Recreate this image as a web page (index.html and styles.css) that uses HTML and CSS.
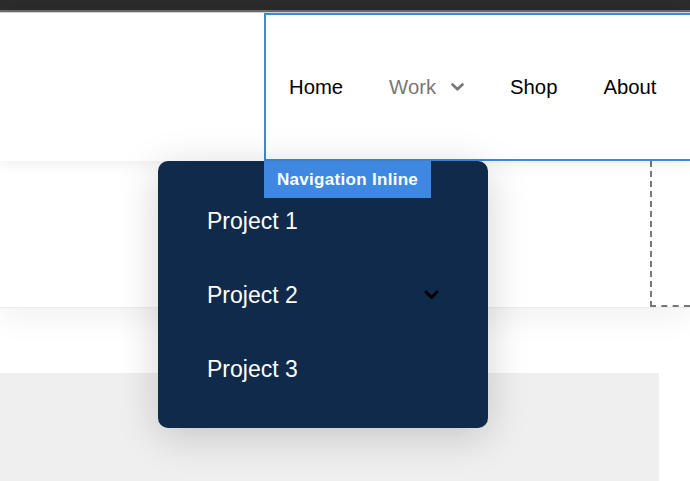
FILE: index.html
```html
<!DOCTYPE html>
<html lang="en">

<head>
	<meta charset="UTF-8">
	<title>Navigation Inline</title>
	<link rel="stylesheet" href="styles.css">
</head>

<body>
	<div class="topbar"></div>

	<header class="header">
		<div class="logo-space"></div>
		<nav class="nav">
			<a class="nav-item">Home</a>
			<a class="nav-item muted">Work
				<svg class="chev" width="13" height="8" viewBox="0 0 13 8"><path d="M1.5 1.5 L6.5 6.3 L11.5 1.5" fill="none" stroke="#777" stroke-width="2.6" stroke-linecap="round" stroke-linejoin="round"/></svg>
			</a>
			<a class="nav-item">Shop</a>
			<a class="nav-item">About</a>
			<span class="nav-label">Navigation Inline</span>
		</nav>

		<!-- dropdown opened under Work -->
		<ul class="dropdown">
			<li class="dropdown-item">Project 1</li>
			<li class="dropdown-item">Project 2
				<svg width="15" height="10" viewBox="0 0 15 10"><path d="M2 2 L7.5 7.5 L13 2" fill="none" stroke="#000" stroke-width="3" stroke-linecap="round" stroke-linejoin="round"/></svg>
			</li>
			<li class="dropdown-item">Project 3</li>
		</ul>
	</header>

	<section class="band">
		<div class="dashed"></div>
	</section>

	<section class="content">
		<div class="panel"></div>
	</section>
</body>

</html>
```

FILE: styles.css
```css
html,
body {
	margin: 0;
	overflow: hidden;
}

body {
	background: #fff;
	font-family: "Liberation Sans", Arial, sans-serif;
	height: 481px;
}

.topbar {
	height: 10px;
	background: #2b2b2b;
	border-bottom: 2px solid #6b6b6b;
	box-shadow: 0 1px 0 #d4d4d4;
	margin-bottom: 1px;
}

.header {
	position: relative;
	z-index: 3;
	display: flex;
	height: 148px;
	background: #fff;
	box-shadow: 0 3px 14px rgba(0, 0, 0, .07);
}

.logo-space {
	flex: 0 0 264px;
}

.nav {
	position: relative;
	display: flex;
	align-items: center;
	flex: none;
	padding-right: 60px;
	border: 2px solid #3e88e2;
}

.nav-item {
	display: flex;
	align-items: center;
	padding: 0 23px;
	font-size: 20.3px;
	color: #000;
	cursor: pointer;
}

.nav-item.muted {
	color: #777;
}

.chev {
	margin-left: 15px;
}

.nav-label {
	position: absolute;
	top: calc(100% + 2px);
	left: -2px;
	z-index: 5;
	height: 37px;
	line-height: 38px;
	padding: 0 13px;
	background: #3e88e2;
	color: #fff;
	font-size: 17px;
	font-weight: bold;
	letter-spacing: .3px;
}

.dropdown {
	position: absolute;
	top: 100%;
	left: 158px;
	z-index: 4;
	width: 330px;
	height: 267px;
	box-sizing: border-box;
	margin: 0;
	padding: 23px 49px 22px;
	list-style: none;
	background: #0f2a4a;
	border-radius: 10px;
	box-shadow: 0 8px 40px rgba(0, 0, 0, .18);
}

.dropdown-item {
	display: flex;
	align-items: center;
	justify-content: space-between;
	height: 74px;
	font-size: 23px;
	color: #fff;
}

.band {
	position: relative;
	z-index: 2;
	display: flex;
	height: 146px;
	background: #fff;
	box-shadow: 0 10px 30px rgba(0, 0, 0, .06);
	border-bottom: 1px solid #ececec;
}

.dashed {
	margin-left: 650px;
	flex: 1;
	border-left: 2px dashed #777;
	border-bottom: 2px dashed #777;
}

.content {
	padding-top: 65px;
}

.panel {
	width: 659px;
	height: 108px;
	background: #efefef;
}
```
